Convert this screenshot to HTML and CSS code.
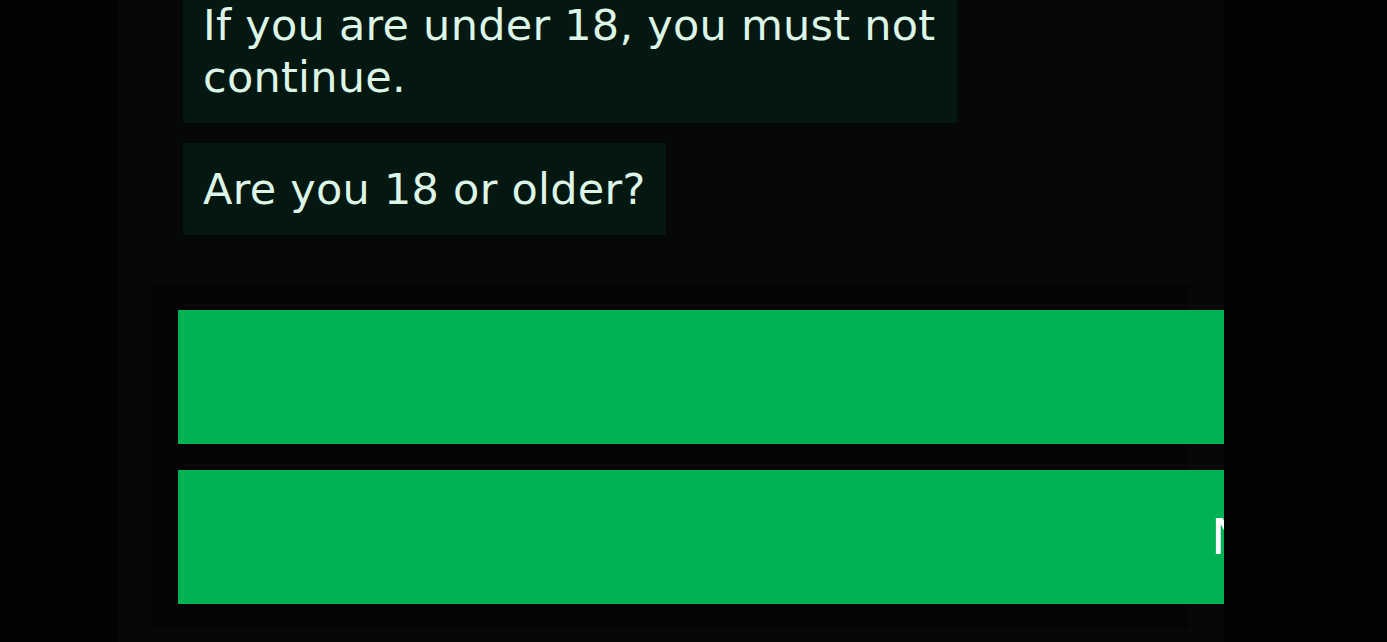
FILE: index.html
```html
<!DOCTYPE html>
<html lang="en">
<head>
    <meta charset="UTF-8">
    <meta name="viewport" content="width=device-width, initial-scale=1.0">
    <title>Age Check</title>
    <link rel="stylesheet" href="styles.css">
</head>
<body>
    <div class="panel">
        <div class="messages">
            <div class="bubble">If you are under 18, you must not continue.</div>
            <div class="bubble">Are you 18 or older?</div>
        </div>

        <div class="choices">
            <button class="choice" aria-label="Yes"></button>
            <button class="choice">No</button>
        </div>
    </div>
</body>
</html>
```

FILE: styles.css
```css
body {
    margin: 0;
    background-color: #030305;
    font-family: "DejaVu Sans", sans-serif;
    height: 642px;
    overflow: hidden;
}
.panel {
    margin-left: 117px;
    width: 1107px;
    height: 642px;
    background-color: #060709;
    overflow: hidden;
}
.messages {
    display: flex;
    flex-direction: column;
    align-items: flex-start;
    gap: 20px;
    margin-top: -21px;
    padding-left: 66px;
}
.bubble {
    max-width: 734px;
    padding: 20px;
    background-color: #041710;
    color: #dcf5e6;
    font-size: 43px;
    line-height: 52px;
    letter-spacing: 0.25px;
}
.choices {
    display: flex;
    flex-direction: column;
    gap: 26px;
    width: 986px;
    margin: 50px 0 0 36px;
    padding: 25px;
    background-color: #040406;
}
.choice {
    flex-shrink: 0;
    width: 2134px;
    height: 134px;
    padding: 0;
    border: none;
    background-color: #00b253;
    color: #ffffff;
    font-family: "DejaVu Sans", sans-serif;
    font-size: 50px;
    text-align: center;
    cursor: pointer;
}
```
